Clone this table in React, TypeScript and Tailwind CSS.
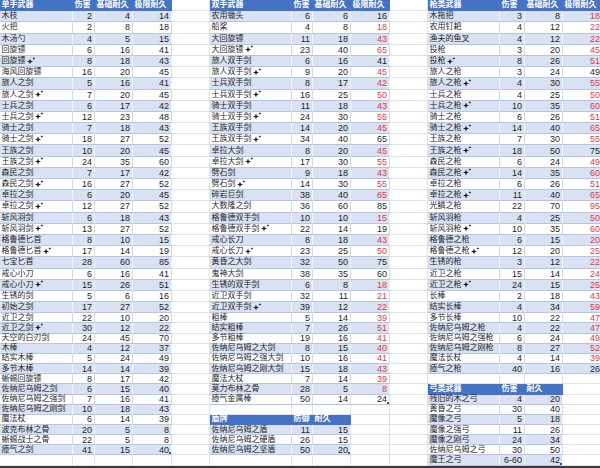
import React from 'react';

type Row = (string | number)[];
type Kind = 'head' | 'band' | 'plain' | 'empty';
type Cell = { text?: string; kind: Kind; num?: boolean; red?: boolean; handle?: boolean };

const ROW_COUNT = 43;
const COL_COUNT = 14;

// 5th value 1 = red 极限耐久
const oneHand: Row[] = [
  ['木枝', 2, 4, 14], ['火把', 2, 8, 18], ['木汤勺', 4, 5, 15], ['回旋镖', 6, 16, 41],
  ['回旋镖+', 8, 18, 43], ['海风回旋镖', 16, 20, 45], ['旅人之剑', 5, 16, 41], ['旅人之剑+', 7, 20, 45],
  ['士兵之剑', 6, 17, 42], ['士兵之剑+', 12, 23, 48], ['骑士之剑', 7, 18, 43], ['骑士之剑+', 18, 27, 52],
  ['王族之剑', 10, 20, 45], ['王族之剑+', 24, 35, 60], ['森民之剑', 7, 17, 42], ['森民之剑+', 16, 27, 52],
  ['卓拉之剑', 6, 20, 45], ['卓拉之剑+', 12, 27, 52], ['斩风羽剑', 6, 18, 43], ['斩风羽剑+', 13, 27, 52],
  ['格鲁德匕首', 8, 10, 15], ['格鲁德匕首+', 17, 14, 19], ['七宝匕首', 28, 60, 85], ['戒心小刀', 6, 16, 41],
  ['戒心小刀+', 15, 26, 51], ['生锈的剑', 5, 6, 16], ['初始之剑', 17, 27, 52], ['近卫之剑', 22, 10, 20],
  ['近卫之剑+', 30, 12, 22], ['天空的白刃剑', 24, 45, 70], ['木棒', 4, 12, 37], ['结实木棒', 5, 24, 49],
  ['多节木棒', 14, 14, 39], ['蜥蜴回旋镖', 8, 17, 42], ['佐纳尼乌姆之剑', 6, 15, 40], ['佐纳尼乌姆之强剑', 7, 16, 41],
  ['佐纳尼乌姆之刚剑', 10, 18, 43], ['魔法杖', 6, 14, 39], ['波克布林之骨', 20, 5, 8], ['蜥蜴战士之骨', 22, 5, 8],
  ['瘴气之剑', 41, 15, 40],
];

const twoHand: Row[] = [
  ['农用锄头', 6, 6, 16], ['船桨', 4, 8, 18, 1], ['大回旋镖', 11, 18, 43, 1], ['大回旋镖+', 23, 40, 65, 1],
  ['旅人双手剑', 6, 16, 41], ['旅人双手剑+', 9, 20, 45, 1], ['士兵双手剑', 8, 17, 42, 1], ['士兵双手剑+', 16, 25, 50, 1],
  ['骑士双手剑', 11, 18, 43, 1], ['骑士双手剑+', 24, 30, 55, 1], ['王族双手剑', 14, 20, 45, 1], ['王族双手剑+', 34, 40, 65],
  ['卓拉大剑', 8, 20, 45, 1], ['卓拉大剑+', 17, 30, 55, 1], ['劈石剑', 9, 18, 43, 1], ['劈石剑+', 14, 30, 55, 1],
  ['碎岩巨剑', 38, 40, 65, 1], ['大数隆之剑', 36, 60, 85], ['格鲁德双手剑', 10, 10, 15, 1], ['格鲁德双手剑+', 22, 14, 19],
  ['戒心长刀', 8, 18, 43, 1], ['戒心长刀+', 23, 25, 50, 1], ['黄昏之大剑', 32, 50, 75], ['鬼神大剑', 38, 35, 60],
  ['生锈的双手剑', 6, 8, 18, 1], ['近卫双手剑', 32, 11, 21, 1], ['近卫双手剑+', 39, 12, 22, 1], ['粗棒', 5, 14, 39, 1],
  ['结实粗棒', 7, 26, 51, 1], ['多节粗棒', 19, 16, 41, 1], ['佐纳尼乌姆之大剑', 8, 15, 40, 1], ['佐纳尼乌姆之强大剑', 10, 16, 41, 1],
  ['佐纳尼乌姆之刚大剑', 15, 18, 43, 1], ['魔法大杖', 7, 14, 39, 1], ['莫力布林之骨', 28, 5, 8, 1], ['瘴气金属棒', 50, 14, 24],
];

const spears: Row[] = [
  ['木拖把', 3, 8, 18, 1], ['农用钉耙', 4, 12, 22, 1], ['渔夫的鱼叉', 4, 12, 22, 1], ['投枪', 3, 20, 45, 1],
  ['投枪+', 8, 26, 51, 1], ['旅人之枪', 3, 24, 49], ['旅人之枪+', 4, 30, 55, 1], ['士兵之枪', 4, 25, 50, 1],
  ['士兵之枪+', 10, 35, 60, 1], ['骑士之枪', 6, 26, 51, 1], ['骑士之枪+', 14, 40, 65, 1], ['王族之枪', 7, 30, 55, 1],
  ['王族之枪+', 18, 50, 75], ['森民之枪', 6, 24, 49, 1], ['森民之枪+', 14, 35, 60, 1], ['卓拉之枪', 6, 26, 51, 1],
  ['卓拉之枪+', 11, 40, 65, 1], ['光鳞之枪', 22, 70, 95, 1], ['斩风羽枪', 4, 25, 50, 1], ['斩风羽枪+', 10, 35, 60, 1],
  ['格鲁德之枪', 6, 15, 20, 1], ['格鲁德之枪+', 12, 20, 25, 1], ['生锈的枪', 3, 12, 22, 1], ['近卫之枪', 15, 14, 24, 1],
  ['近卫之枪+', 24, 15, 25, 1], ['长棒', 2, 18, 43, 1], ['结实长棒', 4, 34, 59, 1], ['多节长棒', 10, 22, 47, 1],
  ['佐纳尼乌姆之枪', 4, 22, 47, 1], ['佐纳尼乌姆之强枪', 6, 24, 49, 1], ['佐纳尼乌姆之刚枪', 8, 27, 52, 1], ['魔法长杖', 4, 14, 39, 1],
  ['瘴气之枪', 40, 16, 26],
];

const shields: Row[] = [
  ['佐纳尼乌姆之盾', 11, 15], ['佐纳尼乌姆之硬盾', 26, 15], ['佐纳尼乌姆之坚盾', 50, 20],
];

const bows: Row[] = [
  ['残旧的木之弓', 4, 20], ['黄昏之弓', 30, 40], ['魔像之弓', 5, 18], ['魔像之强弓', 11, 26],
  ['魔像之刚弓', 24, 34], ['佐纳尼乌姆之弓', 30, 50], ['魔王之弓', '6-60', 42],
];

function placeTable(sheet: Cell[][], top: number, left: number, head: string[], rows: Row[]) {
  head.forEach((h, i) => {
    sheet[top][left + i] = { text: h, kind: 'head' };
  });
  rows.forEach((row, r) => {
    const kind: Kind = r % 2 === 0 ? 'band' : 'plain';
    const red = row[head.length] === 1;
    for (let i = 0; i < head.length; i++) {
      sheet[top + 1 + r][left + i] = {
        text: String(row[i]),
        kind,
        num: i > 0,
        red: red && i === head.length - 1,
        handle: r === rows.length - 1 && i === head.length - 1,
      };
    }
  });
}

function buildSheet() {
  const sheet: Cell[][] = Array.from({ length: ROW_COUNT }, () =>
    Array.from({ length: COL_COUNT }, () => ({ kind: 'empty' as Kind }))
  );
  placeTable(sheet, 0, 0, ['单手武器', '伤害', '基础耐久', '极限耐久'], oneHand);
  placeTable(sheet, 0, 5, ['双手武器', '伤害', '基础耐久', '极限耐久'], twoHand);
  placeTable(sheet, 0, 10, ['枪类武器', '伤害', '基础耐久', '极限耐久'], spears);
  placeTable(sheet, 38, 5, ['盾牌', '防御', '耐久'], shields);
  placeTable(sheet, 35, 10, ['弓类武器', '伤害', '耐久'], bows);
  return sheet;
}

function Sparkle() {
  return (
    <svg width="9" height="8" viewBox="0 0 9 8" className="ml-[1px] -mt-[1px] shrink-0" fill="#1f1f1f">
      <path d="M3 1.4L3.85 3.65L6.1 4.5L3.85 5.35L3 7.6L2.15 5.35L-0.1 4.5L2.15 3.65Z" />
      <path d="M6.9 0.1L7.3 1.1L8.3 1.5L7.3 1.9L6.9 2.9L6.5 1.9L5.5 1.5L6.5 1.1Z" />
    </svg>
  );
}

const kindClass: Record<Kind, string> = {
  head: 'bg-[#4472C4] border-b-[#4472C4] border-r-[#4472C4] text-white font-bold',
  band: 'bg-[#D9E1F2] border-b-[#B4C6E7] border-r-[#F3F6FB] text-[#1f1f1f]',
  plain: 'bg-white border-b-[#B4C6E7] border-r-[#D9D9D9] text-[#1f1f1f]',
  empty: 'bg-white border-b-[#E3E3E3] border-r-[#E3E3E3]',
};

export default function App() {
  const sheet = buildSheet();

  return (
    <div className="w-[600px] h-[468px] overflow-hidden bg-white font-['Liberation_Sans','Noto_Sans_CJK_SC',sans-serif]">
      <div className="grid grid-cols-[73px_22px_38px_39px_38px_82px_21px_38px_39px_38px_72px_25px_38px_40px] grid-rows-[repeat(28,11.2px)_repeat(15,10.16px)]">
        {sheet.map((row, r) =>
          row.map((cell, c) => {
            const plus = !!cell.text && cell.text.endsWith('+');
            const label = plus ? cell.text!.slice(0, -1) : cell.text;
            return (
              <div
                key={`${r}-${c}`}
                className={`relative flex items-center whitespace-nowrap border-b border-r leading-[10px] ${kindClass[cell.kind]} ${
                  cell.num ? 'justify-end pr-[2px] text-[9px]' : 'pl-[1.5px] text-[8px]'
                } ${cell.red ? 'text-[#E23B47]' : ''}`}
              >
                {label}
                {plus && <Sparkle />}
                {cell.handle && <span className="absolute right-0 bottom-0 w-[2px] h-[2px] bg-[#2F5597]" />}
              </div>
            );
          })
        )}
      </div>
      <div className="h-[2px] bg-[#3a3a3a]" />
    </div>
  );
}
